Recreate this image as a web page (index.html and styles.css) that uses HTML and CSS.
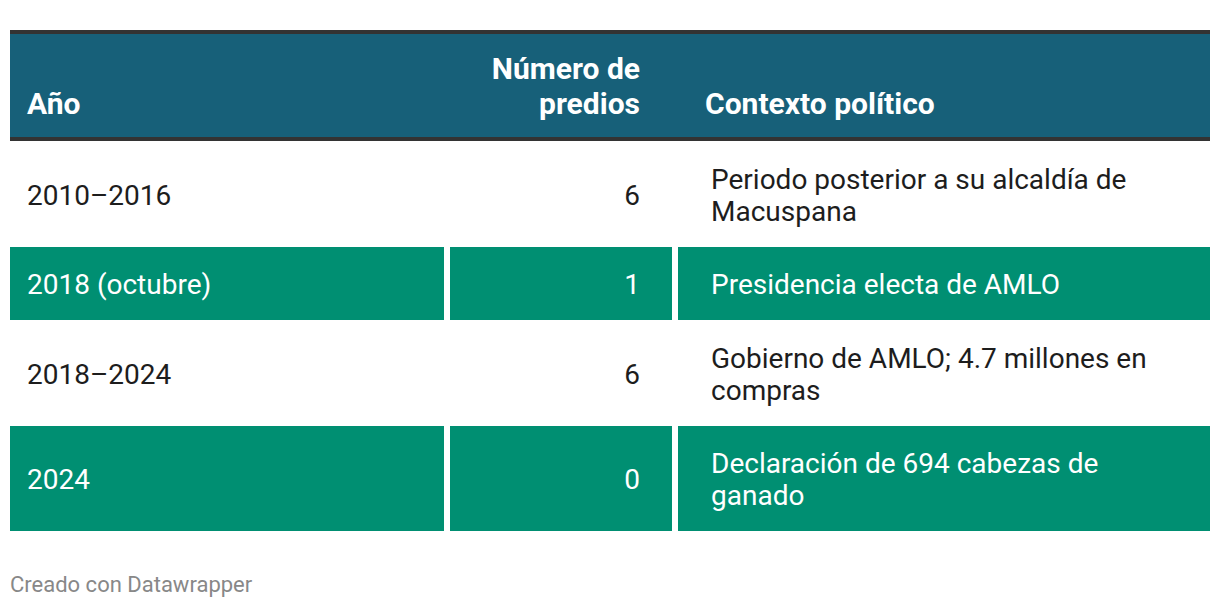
FILE: index.html
```html
<!DOCTYPE html>
<html lang="es">
<head>
<meta charset="utf-8">
<title>Tabla</title>
<link rel="stylesheet" href="styles.css">
</head>
<body>
<div class="chart">
  <div class="table">
    <div class="head">
      <div class="th c1">Año</div>
      <div class="th c2">Número de<br>predios</div>
      <div class="th c3">Contexto político</div>
    </div>
    <div class="row">
      <div class="td c1">2010–2016</div>
      <div class="td c2">6</div>
      <div class="td c3">Periodo posterior a su alcaldía de Macuspana</div>
    </div>
    <div class="row hl">
      <div class="td c1">2018 (octubre)</div>
      <div class="td c2">1</div>
      <div class="td c3">Presidencia electa de AMLO</div>
    </div>
    <div class="row">
      <div class="td c1">2018–2024</div>
      <div class="td c2">6</div>
      <div class="td c3">Gobierno de AMLO; 4.7 millones en compras</div>
    </div>
    <div class="row hl">
      <div class="td c1">2024</div>
      <div class="td c2">0</div>
      <div class="td c3">Declaración de 694 cabezas de ganado</div>
    </div>
  </div>
  <div class="footer">Creado con Datawrapper</div>
</div>
</body>
</html>
```
FILE: styles.css
```css
html, body {
  margin: 0;
  padding: 0;
  background: #ffffff;
}
body {
  font-family: Roboto, "Liberation Sans", sans-serif;
  color: #1d1d1d;
}
.chart {
  padding: 30px 10px 0 10px;
}
.table {
  width: 1200px;
}
.head {
  display: grid;
  grid-template-columns: 434px 228px 538px;
  background: #176079;
  border-top: 4px solid #333333;
  border-bottom: 4px solid #333333;
  height: 103px;
  align-items: end;
  color: #ffffff;
  font-weight: 700;
  font-size: 30px;
  line-height: 35px;
}
.th {
  padding-bottom: 16px;
}
.th.c1 { padding-left: 17px; }
.th.c2 { text-align: right; padding-right: 32px; }
.th.c3 { padding-left: 33px; }
.row {
  display: grid;
  grid-template-columns: 434px 222px 532px;
  column-gap: 6px;
  align-items: stretch;
  font-size: 28px;
  line-height: 32px;
}
.td {
  padding: 22.5px 0 19px 0;
  display: flex;
  align-items: center;
}
.td.c1 { padding-left: 17px; }
.td.c2 { justify-content: flex-end; padding-right: 32px; }
.td.c3 { padding-left: 33px; padding-right: 32px; }
.row.hl .td {
  background: #008f72;
  color: #ffffff;
}
.footer {
  margin-top: 41px;
  font-size: 22px;
  line-height: 26px;
  color: #888888;
}
```
